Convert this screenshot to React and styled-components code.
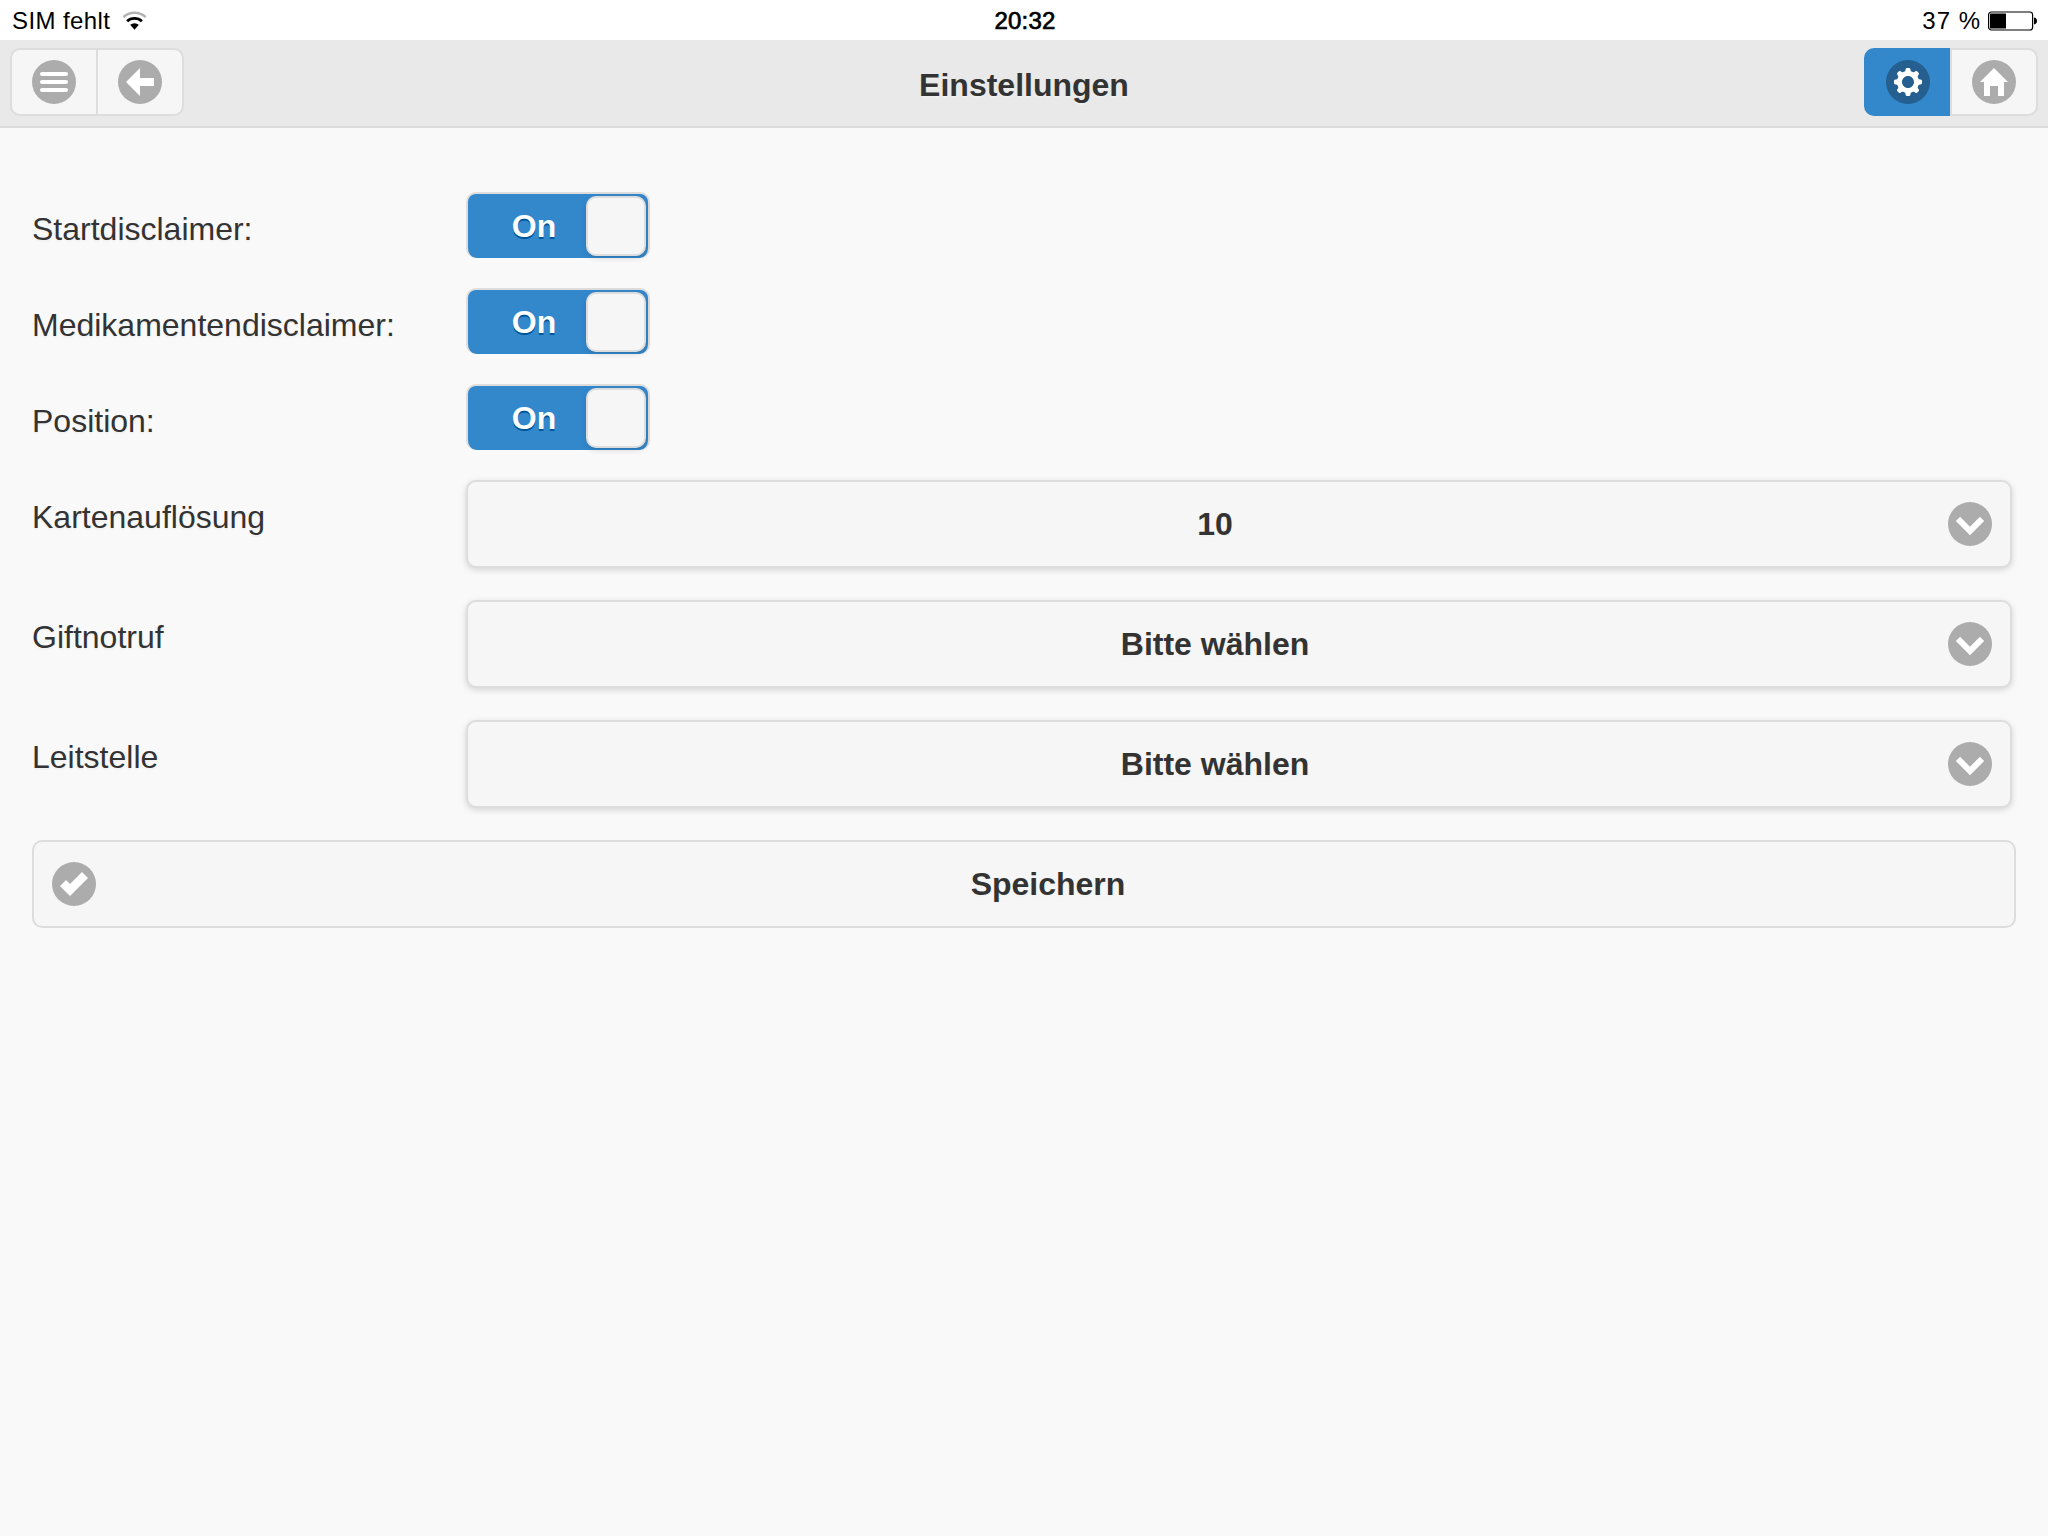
import React from "react";
import styled, { createGlobalStyle, css } from "styled-components";

const GlobalStyle = createGlobalStyle`
  *, *::before, *::after { box-sizing: border-box; }
  body {
    margin: 0;
    background: #f9f9f9;
    color: #333;
    font-family: "Liberation Sans", Helvetica, Arial, sans-serif;
    font-size: 32px;
    line-height: 1.3;
  }
  button { font: inherit; color: inherit; margin: 0; }
`;

const Page = styled.div`
  min-height: 1536px;
  display: flex;
  flex-direction: column;
  background: #f9f9f9;
`;

const StatusBar = styled.div`
  height: 40px;
  display: grid;
  grid-template-columns: 1fr auto 1fr;
  align-items: center;
  padding: 1px 11px 0 12px;
  background: #fff;
  color: #000;
  font-size: 24px;
  line-height: 38px;
`;

const StatusGroup = styled.div`
  display: flex;
  align-items: center;
  justify-content: ${(p) => (p.$end ? "flex-end" : "flex-start")};
  gap: ${(p) => (p.$end ? 7 : 12)}px;
  letter-spacing: ${(p) => (p.$end ? 1 : 0.4)}px;
  svg { display: block; }
`;

const Clock = styled.span`
  -webkit-text-stroke: 0.7px #000;
  padding-left: 1px;
  letter-spacing: 0.2px;
`;

const Header = styled.header`
  height: 88px;
  display: grid;
  grid-template-columns: 1fr auto 1fr;
  align-items: start;
  padding: 8px 10px 0;
  background: #e9e9e9;
  border-bottom: 2px solid #ddd;
`;

const Title = styled.h1`
  margin: 0;
  padding-top: 17px;
  font-size: 32px;
  font-weight: 700;
  line-height: 41.6px;
  text-shadow: 0 2px 0 #eee;
`;

const ControlGroup = styled.nav`
  display: flex;
  justify-self: ${(p) => (p.$end ? "end" : "start")};
`;

const ToolButton = styled.button`
  width: 88px;
  height: 68px;
  display: flex;
  align-items: center;
  justify-content: center;
  padding: 0;
  background: #f6f6f6;
  border: 2px solid #ddd;
  &:first-child { border-radius: 10px 0 0 10px; }
  &:last-child { border-radius: 0 10px 10px 0; margin-left: -2px; }
  ${(p) => p.$active && css`
    background: #3388cc;
    border-color: #3388cc;
  `}
`;

const Disc = styled.span`
  flex: none;
  width: 44px;
  height: 44px;
  display: flex;
  align-items: center;
  justify-content: center;
  border-radius: 50%;
  background: ${(p) => (p.$active ? "#245f8f" : "#acacac")};
  svg { display: block; overflow: visible; }
`;

const Form = styled.main`
  display: flex;
  flex-direction: column;
  padding: 64px 32px 0;
`;

const Field = styled.div`
  display: flex;
  align-items: flex-start;
  height: ${(p) => (p.$tall ? 120 : 96)}px;
  padding-right: 4px;
`;

const Label = styled.label`
  flex: none;
  width: 434px;
  padding-top: 17px;
  text-shadow: 0 2px 0 #f3f3f3;
`;

const Switch = styled.button`
  width: 184px;
  height: 66px;
  display: flex;
  align-items: center;
  padding: 0 2px 0 0;
  background: #3388cc;
  border: 2px solid #ddd;
  border-bottom: 0;
  border-radius: 10px;
`;

const SwitchText = styled.span`
  flex: 1;
  padding-top: 2px;
  padding-left: 14px;
  color: #fff;
  font-weight: 700;
  text-align: center;
  text-shadow: 0 2px 0 #005599;
`;

const Knob = styled.span`
  width: 60px;
  height: 60px;
  background: #f6f6f6;
  border: 2px solid #ddd;
  border-radius: 10px;
  box-shadow: 0 2px 6px rgba(0, 0, 0, 0.15);
`;

const WideButton = styled.button`
  flex: ${(p) => (p.$select ? "1" : "none")};
  height: 88px;
  display: flex;
  align-items: center;
  padding: 0 18px;
  background: #f6f6f6;
  border: 2px solid #ddd;
  border-radius: 10px;
  font-weight: 700;
  box-shadow: ${(p) => (p.$select ? "0 2px 6px rgba(0, 0, 0, 0.15)" : "none")};
`;

const ButtonText = styled.span`
  flex: 1;
  padding-left: ${(p) => (p.$select ? 14 : 18)}px;
  padding-right: ${(p) => (p.$select ? 18 : 14)}px;
  padding-top: 2px;
  text-align: center;
  text-shadow: 0 2px 0 #f3f3f3;
`;

const glyphs = {
  bars: (
    <>
      <rect x="0" y="1" width="14" height="2" rx="1" transform="translate(0 1)" />
      <rect x="0" y="6" width="14" height="2" rx="1" />
      <rect x="0" y="10" width="14" height="2" rx="1" />
    </>
  ),
  back: <polygon points="7,5 7,0 0,7 7,14 7,9 14,9 14,5" />,
  home: <polygon points="7,0 0,7 2,7 2,14 5,14 5,9 9,9 9,14 12,14 12,7 14,7" />,
  down: <polygon points="11.949,3.404 7,8.354 2.05,3.404 -0.071,5.525 7,12.596 14.07,5.525" />,
  check: <polygon points="14,4 11,1 5.003,6.997 3,5 0,8 5,13" />,
  gear: (
    <path
      fillRule="evenodd"
      d="M13.621,5.904l-1.036-0.259c-0.168-0.042-0.303-0.168-0.355-0.331c-0.092-0.284-0.205-0.56-0.339-0.826c-0.078-0.154-0.07-0.338,0.019-0.486l0.549-0.915c0.118-0.197,0.087-0.449-0.075-0.611l-0.858-0.859c-0.163-0.162-0.415-0.193-0.611-0.075l-0.916,0.55C9.851,2.18,9.668,2.188,9.513,2.109C9.247,1.974,8.97,1.861,8.687,1.77c-0.165-0.053-0.29-0.187-0.332-0.355l-0.259-1.036C8.04,0.156,7.839,0,7.609,0H6.393c-0.229,0-0.43,0.156-0.485,0.379L5.648,1.415C5.607,1.583,5.481,1.717,5.317,1.77C5.033,1.861,4.756,1.974,4.49,2.109C4.335,2.188,4.151,2.18,4.002,2.091l-0.915-0.55c-0.197-0.118-0.449-0.087-0.61,0.075L1.617,2.476C1.455,2.638,1.424,2.89,1.542,3.086l0.55,0.916C2.181,4.15,2.189,4.334,2.111,4.488C1.976,4.754,1.863,5.03,1.771,5.314C1.719,5.477,1.584,5.603,1.416,5.645L0.38,5.904C0.157,5.96,0,6.161,0,6.391v1.216c0,0.229,0.157,0.43,0.38,0.486l1.036,0.259c0.168,0.042,0.303,0.168,0.355,0.331c0.092,0.284,0.205,0.56,0.34,0.826c0.078,0.154,0.07,0.338-0.019,0.487l-0.55,0.915c-0.118,0.197-0.087,0.449,0.075,0.611l0.86,0.859c0.161,0.162,0.413,0.193,0.61,0.075l0.915-0.55c0.149-0.089,0.333-0.097,0.488-0.018c0.266,0.135,0.543,0.248,0.827,0.339c0.164,0.053,0.29,0.187,0.331,0.355l0.26,1.036C5.963,13.844,6.164,14,6.393,14h1.216c0.23,0,0.431-0.156,0.487-0.379l0.259-1.036c0.042-0.168,0.167-0.302,0.332-0.355c0.283-0.091,0.56-0.204,0.826-0.339c0.155-0.079,0.338-0.071,0.487,0.018l0.916,0.55c0.196,0.118,0.448,0.087,0.611-0.075l0.858-0.859c0.162-0.162,0.193-0.414,0.075-0.611l-0.549-0.915c-0.089-0.149-0.097-0.333-0.019-0.487c0.134-0.266,0.247-0.542,0.339-0.826c0.052-0.163,0.187-0.289,0.355-0.331l1.036-0.259C13.844,8.04,14,7.839,14,7.607V6.391C14,6.161,13.844,5.96,13.621,5.904z M7,10c-1.657,0-3-1.343-3-3s1.343-3,3-3s3,1.343,3,3S8.657,10,7,10z"
    />
  ),
};

function Icon({ name, active }) {
  return (
    <Disc $active={active}>
      <svg width="28" height="28" viewBox="0 0 14 14" fill="#fff">
        {glyphs[name]}
      </svg>
    </Disc>
  );
}

function Wifi() {
  return (
    <svg width="25" height="20" viewBox="0 0 25 20" fill="none">
      <path d="M1.3 6.1A16.8 16.8 0 0 1 23.7 6.1" stroke="#b3b3b3" strokeWidth="2.5" />
      <path d="M5.1 10.3A11.1 11.1 0 0 1 19.9 10.3" stroke="#000" strokeWidth="2.8" />
      <path d="M12.5 18.7L8.2 13.8A6.5 6.5 0 0 1 16.8 13.8Z" fill="#000" />
    </svg>
  );
}

function Battery() {
  return (
    <svg width="49" height="20" viewBox="0 0 49 20">
      <rect x="0.6" y="1" width="44" height="18" rx="2.8" fill="#fff" stroke="#000" strokeWidth="1.2" />
      <rect x="2" y="2.5" width="16" height="15" rx="0.6" fill="#000" />
      <path d="M46 6.5C50 6.8 50 13.2 46 13.5Z" fill="#000" />
    </svg>
  );
}

const switches = ["Startdisclaimer:", "Medikamentendisclaimer:", "Position:"];
const selects = [
  ["Kartenauflösung", "10"],
  ["Giftnotruf", "Bitte wählen"],
  ["Leitstelle", "Bitte wählen"],
];

export default function App() {
  return (
    <Page>
      <GlobalStyle />
      <StatusBar>
        <StatusGroup>
          <span>SIM fehlt</span>
          <Wifi />
        </StatusGroup>
        <Clock>20:32</Clock>
        <StatusGroup $end>
          <span>37 %</span>
          <Battery />
        </StatusGroup>
      </StatusBar>
      <Header>
        <ControlGroup>
          <ToolButton aria-label="Menü"><Icon name="bars" /></ToolButton>
          <ToolButton aria-label="Zurück"><Icon name="back" /></ToolButton>
        </ControlGroup>
        <Title>Einstellungen</Title>
        <ControlGroup $end>
          <ToolButton $active aria-label="Einstellungen"><Icon name="gear" active /></ToolButton>
          <ToolButton aria-label="Start"><Icon name="home" /></ToolButton>
        </ControlGroup>
      </Header>
      <Form>
        {switches.map((label) => (
          <Field key={label}>
            <Label>{label}</Label>
            <Switch role="switch" aria-checked="true">
              <SwitchText>On</SwitchText>
              <Knob />
            </Switch>
          </Field>
        ))}
        {selects.map(([label, value]) => (
          <Field key={label} $tall>
            <Label>{label}</Label>
            <WideButton $select>
              <ButtonText $select>{value}</ButtonText>
              <Icon name="down" />
            </WideButton>
          </Field>
        ))}
        <WideButton>
          <Icon name="check" />
          <ButtonText>Speichern</ButtonText>
        </WideButton>
      </Form>
    </Page>
  );
}
